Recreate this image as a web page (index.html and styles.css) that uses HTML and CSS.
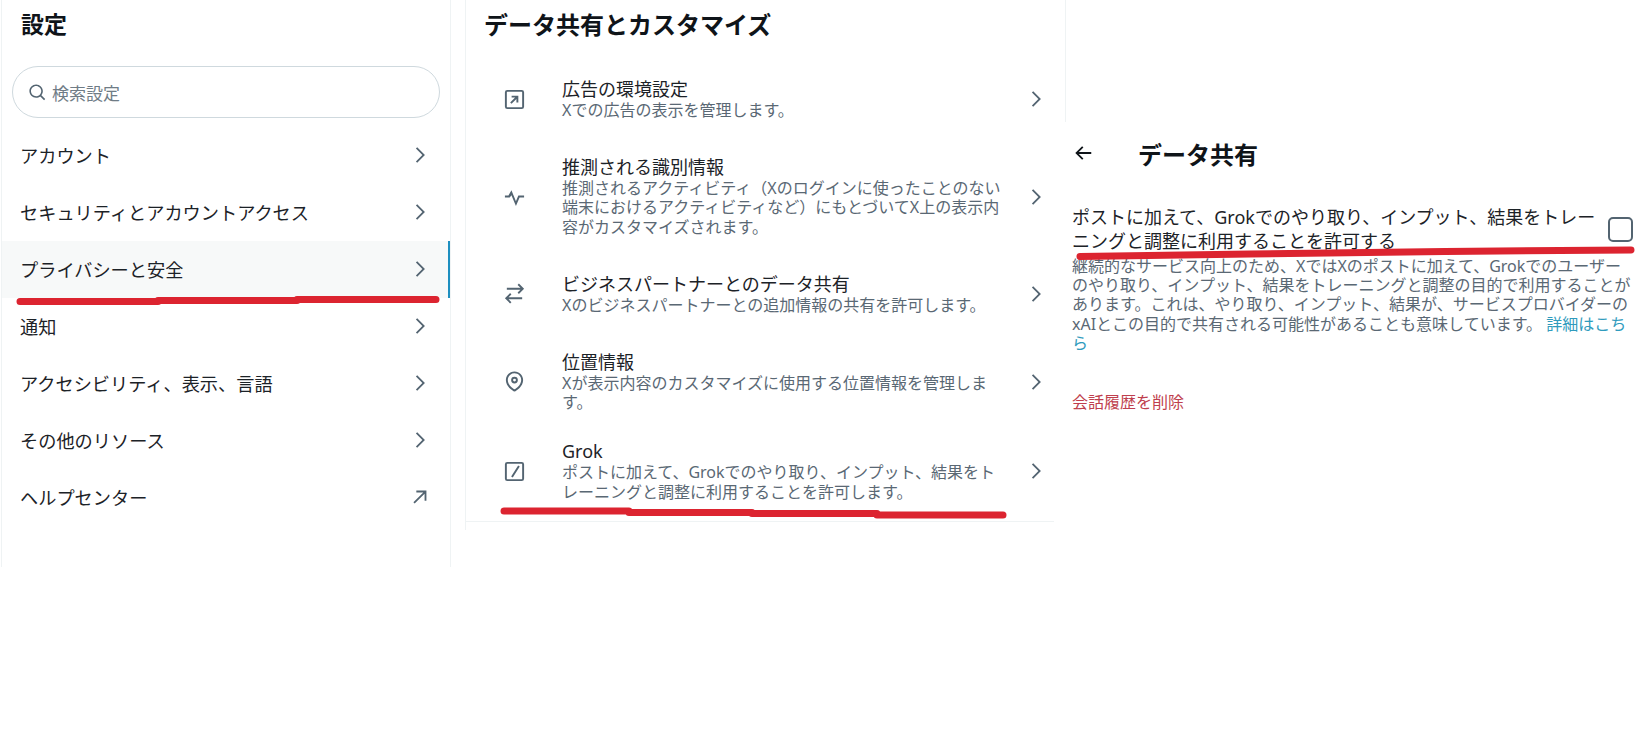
FILE: index.html
```html
<!DOCTYPE html>
<html lang="ja">
  <head>
    <meta charset="UTF-8" />
    <meta name="viewport" content="width=device-width, initial-scale=1.0" />
    <title>データ共有</title>
    <link rel="stylesheet" href="styles.css">
  </head>
  <body>
    <div class="page">
      <!-- settings menu -->
      <nav class="menu">
        <h2 class="menu-title">設定</h2>
        <div class="search">
          <svg class="search-icon" viewBox="0 0 24 24"><path d="M10.25 3.75c-3.59 0-6.5 2.91-6.5 6.5s2.91 6.5 6.5 6.5c1.795 0 3.419-.726 4.596-1.904 1.178-1.177 1.904-2.801 1.904-4.596 0-3.59-2.91-6.5-6.5-6.5zm-8.5 6.5c0-4.694 3.806-8.5 8.5-8.5s8.5 3.806 8.5 8.5c0 1.986-.682 3.815-1.824 5.262l4.781 4.781-1.414 1.414-4.781-4.781c-1.447 1.142-3.276 1.824-5.262 1.824-4.694 0-8.5-3.806-8.5-8.5z"/></svg>
          <span>検索設定</span>
        </div>
        <a class="menu-row"><span>アカウント</span><svg class="chevron" viewBox="0 0 24 24"><path d="M14.586 12L7.543 4.96l1.414-1.42L17.414 12l-8.457 8.46-1.414-1.42L14.586 12z"/></svg></a>
        <a class="menu-row"><span>セキュリティとアカウントアクセス</span><svg class="chevron" viewBox="0 0 24 24"><path d="M14.586 12L7.543 4.96l1.414-1.42L17.414 12l-8.457 8.46-1.414-1.42L14.586 12z"/></svg></a>
        <a class="menu-row active"><span>プライバシーと安全</span><svg class="chevron" viewBox="0 0 24 24"><path d="M14.586 12L7.543 4.96l1.414-1.42L17.414 12l-8.457 8.46-1.414-1.42L14.586 12z"/></svg></a>
        <a class="menu-row"><span>通知</span><svg class="chevron" viewBox="0 0 24 24"><path d="M14.586 12L7.543 4.96l1.414-1.42L17.414 12l-8.457 8.46-1.414-1.42L14.586 12z"/></svg></a>
        <a class="menu-row"><span>アクセシビリティ、表示、言語</span><svg class="chevron" viewBox="0 0 24 24"><path d="M14.586 12L7.543 4.96l1.414-1.42L17.414 12l-8.457 8.46-1.414-1.42L14.586 12z"/></svg></a>
        <a class="menu-row"><span>その他のリソース</span><svg class="chevron" viewBox="0 0 24 24"><path d="M14.586 12L7.543 4.96l1.414-1.42L17.414 12l-8.457 8.46-1.414-1.42L14.586 12z"/></svg></a>
        <a class="menu-row"><span>ヘルプセンター</span><svg class="chevron" viewBox="0 0 24 24"><path d="M6.2 19.2l-1.4-1.4L15.6 7H8V5h11v11h-2V8.4L6.2 19.2z"/></svg></a>
      </nav>

      <!-- data sharing list -->
      <section class="sharing">
        <h2 class="sharing-title">データ共有とカスタマイズ</h2>
        <a class="sharing-row">
          <svg class="row-icon" viewBox="0 0 24 24"><path d="M4.5 2h15A2.5 2.5 0 0 1 22 4.5v15a2.5 2.5 0 0 1-2.5 2.5h-15A2.5 2.5 0 0 1 2 19.5v-15A2.5 2.5 0 0 1 4.5 2zm0 2a.5.5 0 0 0-.5.5v15a.5.5 0 0 0 .5.5h15a.5.5 0 0 0 .5-.5v-15a.5.5 0 0 0-.5-.5h-15z"/><path d="M8.9 16.5l-1.4-1.4L12.6 10H9V8h7v7h-2v-3.6l-5.1 5.1z"/></svg>
          <div class="row-text">
            <div class="row-title">広告の環境設定</div>
            <div class="row-desc">Xでの広告の表示を管理します。</div>
          </div>
          <svg class="chevron" viewBox="0 0 24 24"><path d="M14.586 12L7.543 4.96l1.414-1.42L17.414 12l-8.457 8.46-1.414-1.42L14.586 12z"/></svg>
        </a>
        <a class="sharing-row">
          <svg class="row-icon" viewBox="0 0 24 24"><path d="M8.8 5.5l4.7 11.4 2.5-5.9h6v2h-4.7l-3.8 9-4.7-11.4L7 13H2v-2h3.7l3.1-5.5z"/></svg>
          <div class="row-text">
            <div class="row-title">推測される識別情報</div>
            <div class="row-desc">推測されるアクティビティ（Xのログインに使ったことのない端末におけるアクティビティなど）にもとづいてX上の表示内容がカスタマイズされます。</div>
          </div>
          <svg class="chevron" viewBox="0 0 24 24"><path d="M14.586 12L7.543 4.96l1.414-1.42L17.414 12l-8.457 8.46-1.414-1.42L14.586 12z"/></svg>
        </a>
        <a class="sharing-row">
          <svg class="row-icon" viewBox="0 0 24 24"><path d="M16.6 1.6L22 7l-5.4 5.4-1.4-1.4 3-3H4V6h14.2l-3-3 1.4-1.4zM7.4 11.6l1.4 1.4-3 3H20v2H5.8l3 3-1.4 1.4L2 17l5.4-5.4z"/></svg>
          <div class="row-text">
            <div class="row-title">ビジネスパートナーとのデータ共有</div>
            <div class="row-desc">Xのビジネスパートナーとの追加情報の共有を許可します。</div>
          </div>
          <svg class="chevron" viewBox="0 0 24 24"><path d="M14.586 12L7.543 4.96l1.414-1.42L17.414 12l-8.457 8.46-1.414-1.42L14.586 12z"/></svg>
        </a>
        <a class="sharing-row">
          <svg class="row-icon" viewBox="0 0 24 24"><path d="M12 7a3.5 3.5 0 1 0 0 7 3.5 3.5 0 0 0 0-7zm-1.5 3.5a1.5 1.5 0 1 1 3 0 1.5 1.5 0 0 1-3 0z"/><path d="M12 1.5c-5 0-9 3.9-9 8.9 0 3.4 1.7 6.2 3.7 8.3 2 2 4.2 3.3 5.3 3.8 1.1-.5 3.3-1.8 5.3-3.8 2-2.1 3.7-4.9 3.7-8.3 0-5-4-8.9-9-8.9zm-7 8.9c0-3.9 3.1-6.9 7-6.9s7 3 7 6.9c0 2.7-1.4 5-3.1 6.8-1.5 1.5-3 2.5-3.9 3-.9-.5-2.4-1.5-3.9-3C6.4 15.4 5 13.1 5 10.4z"/></svg>
          <div class="row-text">
            <div class="row-title">位置情報</div>
            <div class="row-desc">Xが表示内容のカスタマイズに使用する位置情報を管理します。</div>
          </div>
          <svg class="chevron" viewBox="0 0 24 24"><path d="M14.586 12L7.543 4.96l1.414-1.42L17.414 12l-8.457 8.46-1.414-1.42L14.586 12z"/></svg>
        </a>
        <a class="sharing-row last">
          <svg class="row-icon" viewBox="0 0 24 24"><path d="M4.5 2h15A2.5 2.5 0 0 1 22 4.5v15a2.5 2.5 0 0 1-2.5 2.5h-15A2.5 2.5 0 0 1 2 19.5v-15A2.5 2.5 0 0 1 4.5 2zm0 2a.5.5 0 0 0-.5.5v15a.5.5 0 0 0 .5.5h15a.5.5 0 0 0 .5-.5v-15a.5.5 0 0 0-.5-.5h-15z"/><path d="M15.8 5.7l1.7 1-7.3 11.6-1.7-1 7.3-11.6z"/></svg>
          <div class="row-text">
            <div class="row-title">Grok</div>
            <div class="row-desc">ポストに加えて、Grokでのやり取り、インプット、結果をトレーニングと調整に利用することを許可します。</div>
          </div>
          <svg class="chevron" viewBox="0 0 24 24"><path d="M14.586 12L7.543 4.96l1.414-1.42L17.414 12l-8.457 8.46-1.414-1.42L14.586 12z"/></svg>
        </a>
      </section>

      <!-- grok detail -->
      <section class="detail">
        <header class="detail-head">
          <svg class="back" viewBox="0 0 24 24"><path d="M7.414 13l5.043 5.04-1.414 1.42L3.586 12l7.457-7.46 1.414 1.42L7.414 11H21v2H7.414z"/></svg>
          <h2 class="detail-title">データ共有</h2>
        </header>
        <div class="allow">
          <div class="allow-label">ポストに加えて、Grokでのやり取り、インプット、結果をトレーニングと調整に利用することを許可する</div>
          <span class="checkbox"></span>
        </div>
        <p class="detail-desc">継続的なサービス向上のため、XではXのポストに加えて、Grokでのユーザーのやり取り、インプット、結果をトレーニングと調整の目的で利用することがあります。これは、やり取り、インプット、結果が、サービスプロバイダーのxAIとこの目的で共有される可能性があることも意味しています。 <a class="more">詳細はこちら</a></p>
        <a class="delete">会話履歴を削除</a>
      </section>

      <!-- red marker strokes drawn over the screenshot -->
      <svg class="marks" viewBox="0 0 1645 742">
        <path d="M20 301.5H158M158 300.5H297M297 299.5H436"/>
        <path d="M504 511H629M629 512.5H752M752 513.5H877M877 515H1003"/>
        <path d="M1080 256.5L1250 254L1445 251.5L1631 250"/>
      </svg>
    </div>
  </body>
</html>
```

FILE: styles.css
```css
body {
  margin: 0;
  background-color: white;
  color: #1c2227;
  font-family: "Noto Sans", "Noto Sans CJK JP", sans-serif;
}
h2 {
  margin: 0;
  font-weight: 700;
  color: #0f1419;
}
a {
  color: inherit;
}
svg {
  fill: #536471;
  flex-shrink: 0;
}
.page {
  position: relative;
  display: flex;
  align-items: flex-start;
  height: 742px;
  overflow: hidden;
}

.menu {
  width: 448px;
  height: 567px;
  margin-left: 1px;
  border-left: 1px solid #eff3f4;
  border-right: 1px solid #eff3f4;
}
.menu-title {
  padding: 6px 0 0 19px;
  font-size: 23px;
  line-height: 36px;
}
.search {
  display: flex;
  align-items: center;
  gap: 5px;
  height: 50px;
  margin: 24px 10px 9px 10px;
  padding-left: 15px;
  border: 1px solid #cfd9de;
  border-radius: 26px;
  color: #6f7c86;
  font-size: 17px;
}
.search-icon {
  width: 19px;
  height: 19px;
}
.menu-row {
  display: flex;
  align-items: center;
  justify-content: space-between;
  height: 57px;
  padding: 0 19px 2px 18px;
  box-sizing: border-box;
  font-size: 18.2px;
}
.menu-row.active {
  background-color: #f7f9f9;
  box-shadow: inset -2px 0 0 #1d8fc0;
}
.chevron {
  width: 22px;
  height: 22px;
}

.sharing {
  position: relative;
  width: 588px;
  margin-left: 14px;
  border-left: 1px solid #eff3f4;
  min-height: 530px;
}
.sharing::after {
  content: "";
  position: absolute;
  top: 0;
  right: -12px;
  height: 122px;
  border-right: 1px solid #eff3f4;
}
.sharing-title {
  padding: 7px 0 17px 18px;
  font-size: 24px;
  line-height: 36px;
}
.sharing-row {
  display: flex;
  align-items: center;
  padding: 18px 0 18px 37px;
}
.sharing-row.last {
  padding-top: 10px;
  padding-bottom: 19px;
  border-bottom: 1px solid #eff3f4;
}
.row-icon {
  width: 23px;
  height: 23px;
  margin-right: 36px;
}
.row-text {
  width: 443.5px;
  margin-right: 19px;
}
.row-title {
  font-size: 18px;
  line-height: 23px;
}
.row-desc {
  color: #5a6874;
  font-size: 16px;
  line-height: 19.2px;
}

.detail {
  width: 564px;
  margin-left: 18px;
  padding-top: 127px;
}
.detail-head {
  display: flex;
  align-items: center;
  height: 52px;
}
.back {
  width: 22px;
  height: 22px;
  margin-right: 44px;
  fill: #0f1419;
}
.detail-title {
  font-size: 24px;
}
.allow {
  display: flex;
  align-items: center;
  gap: 12px;
  margin-top: 26px;
}
.allow-label {
  flex: 1;
  font-size: 18px;
  line-height: 24px;
}
.checkbox {
  flex-shrink: 0;
  box-sizing: border-box;
  width: 25px;
  height: 25px;
  margin-right: 3px;
  border: 2px solid #536471;
  border-radius: 5px;
}
.detail-desc {
  margin: 4px 0 0;
  color: #5a6874;
  font-size: 16px;
  line-height: 19.2px;
}
.more {
  color: #2f9bbd;
}
.delete {
  display: block;
  margin-top: 36px;
  color: #bf3f4e;
  font-size: 16px;
}

.marks {
  position: absolute;
  top: 0;
  left: 0;
  width: 1645px;
  height: 742px;
  fill: none;
  stroke: #dc2430;
  stroke-width: 7;
  stroke-linecap: round;
}
```
